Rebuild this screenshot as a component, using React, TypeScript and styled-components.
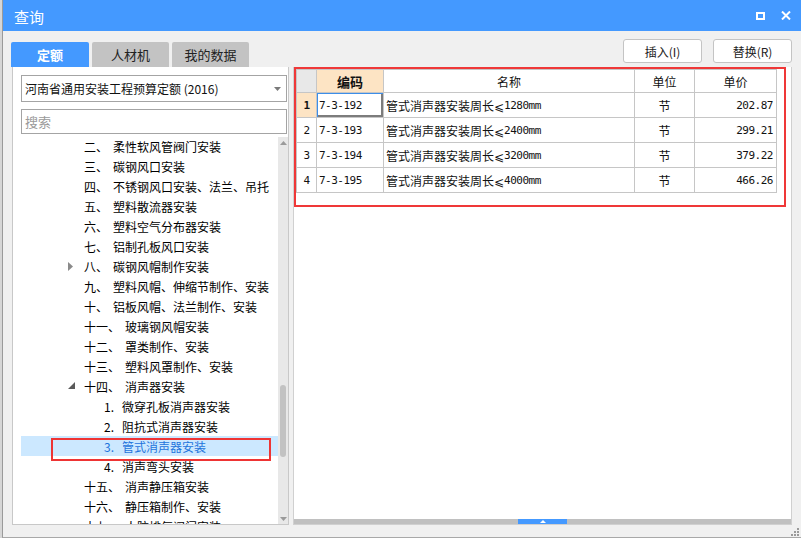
import React from "react";
import styled, { createGlobalStyle } from "styled-components";

const GlobalStyle = createGlobalStyle`
  html, body { margin: 0; padding: 0; }
  body { font-family: "Noto Sans CJK SC", "Noto Sans", sans-serif; font-size: 12px; color: #000; }
  * { box-sizing: border-box; }
`;

const CJK = `"Noto Sans CJK SC", "DejaVu Sans", sans-serif`;
const MONO = `"DejaVu Sans Mono", "Liberation Mono", monospace`;

const Screen = styled.div`
  width: 801px;
  height: 540px;
  overflow: hidden;
  display: flex;
  flex-direction: column;
  background: #fff;
`;
const Main = styled.div`
  display: flex;
  height: 538px;
`;
const BackStrip = styled.div`
  width: 2px;
  background: #d6d6d6;
`;
const BottomStrip = styled.div`
  height: 2px;
  background: #fff;
`;
const Window = styled.div`
  flex: 1;
  display: flex;
  flex-direction: column;
  border-left: 1px solid #9a9a9a;
  border-bottom: 1px solid #a8a8a8;
  background: #f0f0f0;
`;
const TitleBar = styled.div`
  height: 31px;
  flex: none;
  background: #4499ff;
  display: flex;
  align-items: center;
  padding: 0 10px 0 11px;
  color: #fff;
`;
const Title = styled.div`
  font-family: ${CJK};
  font-size: 15px;
  flex: 1;
  padding-top: 2px;
`;
const TitleControls = styled.div`
  display: flex;
  align-items: center;
  gap: 16px;
`;
const Body = styled.div`
  flex: 1;
  display: flex;
  flex-direction: column;
  padding: 0 9px 0 9px;
`;
const TopRow = styled.div`
  height: 36px;
  display: flex;
  align-items: flex-end;
`;
const Tabs = styled.div`
  display: flex;
  gap: 3px;
  margin-left: -1px;
`;
const Tab = styled.div<{ $active?: boolean }>`
  width: ${(p) => (p.$active ? 78 : 77)}px;
  height: 25px;
  display: flex;
  align-items: center;
  justify-content: center;
  border-radius: 2px 2px 0 0;
  font-family: ${CJK};
  font-size: 13px;
  background: ${(p) => (p.$active ? "#4499ff" : "#c3c3c3")};
  color: ${(p) => (p.$active ? "#fff" : "#222")};
  font-weight: ${(p) => (p.$active ? 700 : 400)};
`;
const Buttons = styled.div`
  margin-left: auto;
  align-self: flex-start;
  margin-top: 8px;
  display: flex;
  gap: 11px;
`;
const Button = styled.div`
  width: 79px;
  height: 24px;
  display: flex;
  align-items: center;
  justify-content: center;
  background: #fff;
  border: 1px solid #c4c4c4;
  border-radius: 3px;
  font-family: ${CJK};
  font-size: 12px;
  color: #222;
`;
const Panels = styled.div`
  height: 458px;
  display: flex;
  gap: 4px;
`;
const LeftPanel = styled.div`
  width: 277px;
  background: #fff;
  border: 1px solid #c8c8c8;
  border-top: none;
  display: flex;
  flex-direction: column;
  padding: 8px 0 0 8px;
`;
const Select = styled.div`
  height: 27px;
  margin-right: 1px;
  border: 1px solid #a4a4a4;
  display: flex;
  align-items: center;
  padding: 0 5px 0 3px;
  font-family: ${CJK};
  font-size: 12px;
  color: #111;
`;
const SelectText = styled.span`
  flex: 1;
`;
const Search = styled.div`
  height: 25px;
  margin: 7px 1px 0 0;
  border: 1px solid #a4a4a4;
  display: flex;
  align-items: center;
  padding-left: 3px;
  font-family: ${CJK};
  font-size: 13px;
  color: #9a9a9a;
`;
const TreeArea = styled.div`
  flex: 1;
  margin-top: 3px;
  display: flex;
  min-height: 0;
`;
const TreeList = styled.div`
  flex: 1;
  overflow: hidden;
  padding-top: 0;
  margin-top: -1px;
`;
const Row = styled.div<{ $indent: number; $selected?: boolean }>`
  position: relative;
  height: 20px;
  display: flex;
  align-items: center;
  padding-left: ${(p) => p.$indent}px;
  background: ${(p) => (p.$selected ? "#cce8ff" : "transparent")};
  color: ${(p) => (p.$selected ? "#1f74dc" : "#000")};
  font-family: ${CJK};
  font-size: 12px;
  white-space: pre;
`;
const Expander = styled.span`
  width: 16px;
  flex: none;
  display: flex;
  align-items: center;
`;
const Num = styled.span<{ $sub?: boolean }>`
  display: inline-block;
  width: ${(p) => (p.$sub ? "18px" : "auto")};
  margin-right: ${(p) => (p.$sub ? "0" : "5px")};
`;
const Highlight = styled.div`
  position: absolute;
  left: 30px;
  top: 2px;
  width: 220px;
  height: 23px;
  border: 2px solid #ee3434;
  z-index: 2;
`;
const VScroll = styled.div`
  width: 10px;
  flex: none;
  background: #e8e8e8;
  display: flex;
  flex-direction: column;
  align-items: center;
  padding: 4px 0 3px;
`;
const VThumb = styled.div`
  width: 6px;
  height: 72px;
  margin-top: 240px;
  border-radius: 3px;
  background: #c2c2c2;
`;
const Fill = styled.div`
  flex: 1;
`;
const RightPanel = styled.div`
  flex: 1;
  background: #fff;
  border: 1px solid #d0d0d0;
  border-top: none;
  display: flex;
  flex-direction: column;
`;
const RedFrame = styled.div`
  height: 140px;
  margin-right: 5px;
  border: 2px solid #ef3838;
`;
const Grid = styled.div`
  display: grid;
  grid-template-columns: 20px 67px 251px 60px 82px;
  grid-template-rows: 23px repeat(4, 25px);
  width: 481px;
  border-left: 1px solid #c6c6c6;
  border-top: 1px solid #c6c6c6;
`;
const Cell = styled.div<{
  $align?: "left" | "center" | "right";
  $bg?: string;
  $bold?: boolean;
  $mono?: boolean;
  $focus?: boolean;
  $size?: number;
}>`
  border-right: 1px solid #c6c6c6;
  border-bottom: 1px solid #c6c6c6;
  display: flex;
  align-items: center;
  justify-content: ${(p) =>
    p.$align === "center" ? "center" : p.$align === "right" ? "flex-end" : "flex-start"};
  padding: 0 ${(p) => (p.$align === "right" ? "3px" : "0")} 0 ${(p) => (p.$align === "left" ? "2px" : "0")};
  background: ${(p) => p.$bg || "#fff"};
  font-weight: ${(p) => (p.$bold ? 700 : 400)};
  font-family: ${(p) => (p.$mono ? MONO : CJK)};
  font-size: ${(p) => p.$size || 12}px;
  letter-spacing: ${(p) => (p.$mono ? "-0.5px" : "0")};
  color: #111;
  white-space: pre;
  box-shadow: ${(p) =>
    p.$focus ? "inset 1px 1px 0 #3d8ee8, inset -2px -2px 0 #7c7c7c" : "none"};
`;
const Ascii = styled.span`
  font-family: ${MONO};
  font-size: 11px;
  letter-spacing: -0.5px;
`;
const HScroll = styled.div`
  height: 5px;
  background: #c0c0c0;
  display: flex;
  justify-content: center;
`;
const HThumb = styled.div`
  width: 49px;
  background: #4499ff;
  display: flex;
  align-items: center;
  justify-content: center;
`;
const Footer = styled.div`
  flex: 1;
  display: flex;
  justify-content: flex-end;
  align-items: flex-start;
  margin-right: -8px;
  padding-top: 2px;
`;

type Item = {
  num: string;
  text: string;
  level: 0 | 1;
  expander?: "closed" | "open";
  selected?: boolean;
};

const items: Item[] = [
  { num: "二、", text: "柔性软风管阀门安装", level: 0 },
  { num: "三、", text: "碳钢风口安装", level: 0 },
  { num: "四、", text: "不锈钢风口安装、法兰、吊托", level: 0 },
  { num: "五、", text: "塑料散流器安装", level: 0 },
  { num: "六、", text: "塑料空气分布器安装", level: 0 },
  { num: "七、", text: "铝制孔板风口安装", level: 0 },
  { num: "八、", text: "碳钢风帽制作安装", level: 0, expander: "closed" },
  { num: "九、", text: "塑料风帽、伸缩节制作、安装", level: 0 },
  { num: "十、", text: "铝板风帽、法兰制作、安装", level: 0 },
  { num: "十一、", text: "玻璃钢风帽安装", level: 0 },
  { num: "十二、", text: "罩类制作、安装", level: 0 },
  { num: "十三、", text: "塑料风罩制作、安装", level: 0 },
  { num: "十四、", text: "消声器安装", level: 0, expander: "open" },
  { num: "1.", text: "微穿孔板消声器安装", level: 1 },
  { num: "2.", text: "阻抗式消声器安装", level: 1 },
  { num: "3.", text: "管式消声器安装", level: 1, selected: true },
  { num: "4.", text: "消声弯头安装", level: 1 },
  { num: "十五、", text: "消声静压箱安装", level: 0 },
  { num: "十六、", text: "静压箱制作、安装", level: 0 },
  { num: "十七、", text: "人防排气阀门安装", level: 0 },
];

const rows = [
  { n: "1", code: "7-3-192", len: "1280mm", price: "202.87" },
  { n: "2", code: "7-3-193", len: "2400mm", price: "299.21" },
  { n: "3", code: "7-3-194", len: "3200mm", price: "379.22" },
  { n: "4", code: "7-3-195", len: "4000mm", price: "466.26" },
];

const ExpandIcon = ({ kind }: { kind: "closed" | "open" }) =>
  kind === "closed" ? (
    <svg width="5" height="9" viewBox="0 0 5 9">
      <polygon points="0,0 5,4.5 0,9" fill="#8a8a8a" />
    </svg>
  ) : (
    <svg width="7" height="7" viewBox="0 0 7 7" style={{ marginTop: -2 }}>
      <polygon points="7,0 7,7 0,7" fill="#5a5a5a" />
    </svg>
  );

const Tri = ({ up, color, w = 7, h = 4 }: { up?: boolean; color: string; w?: number; h?: number }) => (
  <svg width={w} height={h} viewBox={`0 0 ${w} ${h}`}>
    <polygon points={up ? `0,${h} ${w / 2},0 ${w},${h}` : `0,0 ${w},0 ${w / 2},${h}`} fill={color} />
  </svg>
);

const Grip = () => (
  <svg width="10" height="10" viewBox="0 0 10 10">
    <rect x="7" y="1" width="2" height="2" fill="#9a9a9a" />
    <rect x="4" y="4" width="2" height="2" fill="#9a9a9a" />
    <rect x="7" y="4" width="2" height="2" fill="#9a9a9a" />
    <rect x="1" y="7" width="2" height="2" fill="#9a9a9a" />
    <rect x="4" y="7" width="2" height="2" fill="#9a9a9a" />
    <rect x="7" y="7" width="2" height="2" fill="#9a9a9a" />
  </svg>
);

export default function App() {
  return (
    <Screen>
      <GlobalStyle />
      <Main>
        <BackStrip />
        <Window>
          <TitleBar>
            <Title>查询</Title>
            <TitleControls>
              <svg width="9" height="8" viewBox="0 0 9 8">
                <rect x="1" y="1" width="7" height="6" fill="none" stroke="#fff" strokeWidth="2" />
              </svg>
              <svg width="10" height="9" viewBox="0 0 10 9">
                <path d="M1 0.5 L9 8.5 M9 0.5 L1 8.5" stroke="#fff" strokeWidth="2" />
              </svg>
            </TitleControls>
          </TitleBar>
          <Body>
            <TopRow>
              <Tabs>
                <Tab $active>定额</Tab>
                <Tab>人材机</Tab>
                <Tab>我的数据</Tab>
              </Tabs>
              <Buttons>
                <Button>插入(I)</Button>
                <Button>替换(R)</Button>
              </Buttons>
            </TopRow>
            <Panels>
              <LeftPanel>
                <Select>
                  <SelectText>河南省通用安装工程预算定额 (2016)</SelectText>
                  <Tri color="#7a7a7a" w={7} h={4} />
                </Select>
                <Search>搜索</Search>
                <TreeArea>
                  <TreeList>
                    {items.map((it, i) => (
                      <Row key={i} $indent={47 + it.level * 20} $selected={it.selected}>
                        <Expander>{it.expander && <ExpandIcon kind={it.expander} />}</Expander>
                        <Num $sub={it.level === 1}>{it.num}</Num>
                        {it.text}
                        {it.selected && <Highlight />}
                      </Row>
                    ))}
                  </TreeList>
                  <VScroll>
                    <Tri up color="#9a9a9a" />
                    <VThumb />
                    <Fill />
                    <Tri color="#9a9a9a" />
                  </VScroll>
                </TreeArea>
              </LeftPanel>
              <RightPanel>
                <RedFrame>
                  <Grid>
                    <Cell $bg="#e8e8e8" />
                    <Cell $align="center" $bg="#fde4c4" $bold $size={13}>编码</Cell>
                    <Cell $align="center">名称</Cell>
                    <Cell $align="center">单位</Cell>
                    <Cell $align="center">单价</Cell>
                    {rows.map((r, i) => (
                      <React.Fragment key={r.n}>
                        <Cell
                          $align="center"
                          $bg={i === 0 ? "#fde4c4" : "#fff"}
                          $bold={i === 0}
                          $mono
                          $size={11}
                        >
                          {r.n}
                        </Cell>
                        <Cell $align="left" $mono $size={11} $focus={i === 0}>
                          {r.code}
                        </Cell>
                        <Cell $align="left">
                          管式消声器安装周长⩽<Ascii>{r.len}</Ascii>
                        </Cell>
                        <Cell $align="center">节</Cell>
                        <Cell $align="right" $mono $size={11}>
                          {r.price}
                        </Cell>
                      </React.Fragment>
                    ))}
                  </Grid>
                </RedFrame>
                <Fill />
                <HScroll>
                  <HThumb>
                    <Tri up color="#fff" w={6} h={3} />
                  </HThumb>
                </HScroll>
              </RightPanel>
            </Panels>
            <Footer>
              <Grip />
            </Footer>
          </Body>
        </Window>
      </Main>
      <BottomStrip />
    </Screen>
  );
}
